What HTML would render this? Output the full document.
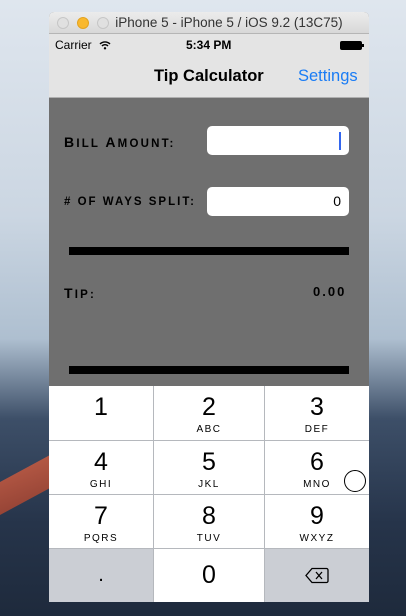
<!DOCTYPE html>
<html><head><style>
*{margin:0;padding:0;box-sizing:border-box}
body{width:406px;height:616px;overflow:hidden;position:relative;font-family:"Liberation Sans",sans-serif;
background:linear-gradient(180deg,#dfe6ee 0%,#cbd6e2 35%,#aebfd0 55%,#3d4f68 68%,#26344a 85%,#1e2a3c 100%)}
.red{position:absolute;left:0;top:455px;width:50px;height:60px;background:linear-gradient(160deg,#c0604a,#8a3c30);clip-path:polygon(0 45%,100% 0,100% 55%,0 100%)}
.win{position:absolute;left:49px;top:12px;width:320px;height:590px;background:#6f6f6f;border-radius:5px 5px 0 0;overflow:hidden}
.title{height:22px;background:linear-gradient(#ececec,#d8d8d8);border-bottom:1px solid #b5b5b5;font-size:13.5px;color:#333;text-align:center;line-height:22px;padding-left:40px}
.dot{position:absolute;top:5px;width:12px;height:12px;border-radius:50%;border:1px solid #c6c6c6;background:#e0e0e0}
.status{position:absolute;top:22px;left:0;width:320px;height:22px;background:#e4e4e4;font-size:12px;color:#000}
.nav{position:absolute;top:44px;left:0;width:320px;height:42px;background:#e4e4e4;border-bottom:1px solid #b0b0b0}
.lbl{position:absolute;font-weight:bold;letter-spacing:2.2px;font-size:11.5px;color:#000;text-transform:uppercase}
.lbl span{font-size:14px}
.box{position:absolute;left:158px;width:142px;height:29px;background:#fff;border-radius:5px;text-align:right;padding-right:8px;line-height:29px;font-size:14px}
.bar{position:absolute;left:20px;width:280px;height:8px;background:#000}
.kp{position:absolute;top:374px;left:0;width:320px;height:216px;background:#b5b8bd}
.k{position:absolute;background:#fff;text-align:center;color:#000}
.k b{display:block;font-weight:normal;font-size:25px;line-height:25px;margin-top:9px}
.k i{display:block;font-style:normal;font-size:10px;letter-spacing:1.5px;margin-top:4px}
.g{background:#cbced4}
</style></head><body>
<div class="red"></div>
<div class="win">
<div class="title">iPhone 5 - iPhone 5 / iOS 9.2 (13C75)</div>
<div class="dot" style="left:8px"></div>
<div class="dot" style="left:28px;background:#f9b82e;border-color:#e3a321"></div>
<div class="dot" style="left:48px"></div>
<div class="status">
<span style="position:absolute;left:6px;top:4px">Carrier</span>
<svg style="position:absolute;left:50px;top:6px" width="12" height="10" viewBox="0 0 12 10"><path d="M1 4a7 7 0 0 1 10 0M3 6a4 4 0 0 1 6 0" stroke="#000" stroke-width="1.4" fill="none"/><circle cx="6" cy="8.3" r="1.2"/></svg>
<span style="position:absolute;left:137px;top:4px;font-weight:bold">5:34 PM</span>
<div style="position:absolute;left:291px;top:7px;width:22px;height:9px;background:#000;border-radius:2px"></div>
<div style="position:absolute;left:313px;top:10px;width:2px;height:3px;background:#000"></div>
</div>
<div class="nav">
<span style="position:absolute;left:105px;top:11px;font-size:16.5px;font-weight:bold">Tip Calculator</span>
<span style="position:absolute;left:249px;top:11px;font-size:16.5px;color:#1a7cf5">Settings</span>
</div>
<div class="lbl" style="left:15px;top:122px"><span>B</span>ill <span>A</span>mount:</div>
<div class="box" style="top:114px"><span style="display:inline-block;width:2px;height:18px;background:#3366ee;vertical-align:middle"></span></div>
<div class="lbl" style="left:15px;top:184px;letter-spacing:2px"># of ways split:</div>
<div class="box" style="top:175px">0</div>
<div class="bar" style="top:235px"></div>
<div class="lbl" style="left:15px;top:273px"><span>T</span>ip:</div>
<div class="lbl" style="left:264px;top:272px;font-size:13px;letter-spacing:2px">0.00</div>
<div class="bar" style="top:354px"></div>
<div class="kp">
<div class="k" style="left:0;top:0;width:104px;height:54px"><b>1</b></div>
<div class="k" style="left:105px;top:0;width:110px;height:54px"><b>2</b><i>ABC</i></div>
<div class="k" style="left:216px;top:0;width:104px;height:54px"><b>3</b><i>DEF</i></div>
<div class="k" style="left:0;top:55px;width:104px;height:53px"><b>4</b><i>GHI</i></div>
<div class="k" style="left:105px;top:55px;width:110px;height:53px"><b>5</b><i>JKL</i></div>
<div class="k" style="left:216px;top:55px;width:104px;height:53px"><b>6</b><i>MNO</i></div>
<div class="k" style="left:0;top:109px;width:104px;height:53px"><b>7</b><i>PQRS</i></div>
<div class="k" style="left:105px;top:109px;width:110px;height:53px"><b>8</b><i>TUV</i></div>
<div class="k" style="left:216px;top:109px;width:104px;height:53px"><b>9</b><i>WXYZ</i></div>
<div class="k g" style="left:0;top:163px;width:104px;height:53px"><b style="margin-top:14px;font-size:20px">.</b></div>
<div class="k" style="left:105px;top:163px;width:110px;height:53px"><b style="margin-top:14px">0</b></div>
<div class="k g" style="left:216px;top:163px;width:104px;height:53px">
<svg style="margin-top:18px" width="24" height="17" viewBox="0 0 24 17"><path d="M7 1.5h14.5a1.5 1.5 0 0 1 1.5 1.5v11a1.5 1.5 0 0 1-1.5 1.5H7L1 8.5z" fill="none" stroke="#000" stroke-width="1.3"/><path d="M11 5l6 7M17 5l-6 7" stroke="#000" stroke-width="1.3"/></svg></div>
</div>
</div>
<div style="position:absolute;left:344px;top:470px;width:22px;height:22px;border:1.5px solid #000;border-radius:50%;background:rgba(255,255,255,.85)"></div>
</body></html>
